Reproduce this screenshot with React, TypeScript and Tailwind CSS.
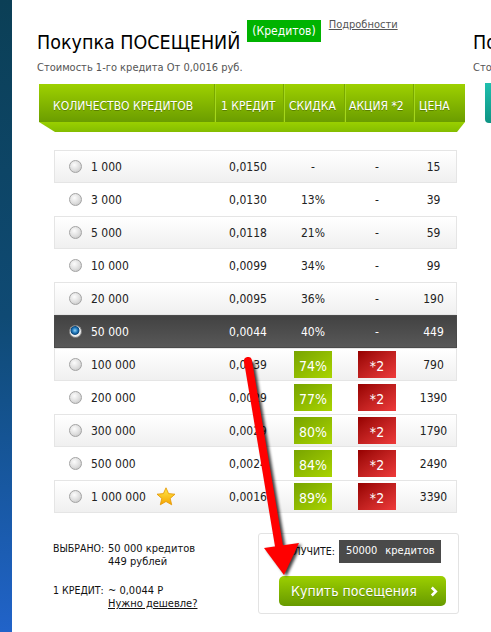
import React from "react";

type Row = { q: string; r: string; d: string; a: string; p: string; sel?: boolean; badge?: boolean; star?: boolean };

const rows: Row[] = [
  { q: "1 000", r: "0,0150", d: "-", a: "-", p: "15" },
  { q: "3 000", r: "0,0130", d: "13%", a: "-", p: "39" },
  { q: "5 000", r: "0,0118", d: "21%", a: "-", p: "59" },
  { q: "10 000", r: "0,0099", d: "34%", a: "-", p: "99" },
  { q: "20 000", r: "0,0095", d: "36%", a: "-", p: "190" },
  { q: "50 000", r: "0,0044", d: "40%", a: "-", p: "449", sel: true },
  { q: "100 000", r: "0,0039", d: "74%", a: "*2", p: "790", badge: true },
  { q: "200 000", r: "0,0029", d: "77%", a: "*2", p: "1390", badge: true },
  { q: "300 000", r: "0,0029", d: "80%", a: "*2", p: "1790", badge: true },
  { q: "500 000", r: "0,0024", d: "84%", a: "*2", p: "2490", badge: true },
  { q: "1 000 000", r: "0,0016", d: "89%", a: "*2", p: "3390", badge: true, star: true },
];

function Radio({ on }: { on?: boolean }) {
  if (on) {
    return (
      <span className="w-[13px] h-[13px] rounded-full border border-[#8a8a8a] shrink-0 bg-[radial-gradient(circle_at_45%_40%,#8fd2f5_0,#1d74b8_30%,#0c4a7e_45%,#f2f2f2_55%,#c6c6c6_100%)]" />
    );
  }
  return (
    <span className="w-[13px] h-[13px] rounded-full border border-[#a3a3a3] shrink-0 bg-[radial-gradient(circle_at_40%_35%,#fcfcfc_0,#dedede_55%,#bcbcbc_100%)]" />
  );
}

function Star() {
  return (
    <svg width="20" height="19" viewBox="0 0 20 19" className="shrink-0">
      <defs>
        <linearGradient id="stg" x1="0" y1="0" x2="0" y2="1">
          <stop offset="0" stopColor="#ffe94a" />
          <stop offset="1" stopColor="#f5a400" />
        </linearGradient>
      </defs>
      <polygon
        points="10,0.8 12.6,6.6 19,7.2 14.2,11.4 15.7,17.8 10,14.5 4.3,17.8 5.8,11.4 1,7.2 7.4,6.6"
        fill="url(#stg)"
        stroke="#e39400"
        strokeWidth="0.8"
        strokeLinejoin="round"
      />
    </svg>
  );
}

function TableRow({ row, idx }: { row: Row; idx: number }) {
  const odd = idx % 2 === 0;
  const cls = row.sel
    ? "bg-gradient-to-b from-[#424242] to-[#585858] border-[#4a4a4a] text-white"
    : odd
    ? "bg-gradient-to-b from-white to-[#f0f0f0] border-[#e5e5e5]"
    : "bg-white border-transparent";
  return (
    <div className={`grid grid-cols-[160px_66px_64px_64px_49px] h-[33px] items-center text-[12px] border ${cls}`}>
      <div className="flex items-center pl-[14px]">
        <Radio on={row.sel} />
        <span className="ml-[9px] whitespace-nowrap">{row.q}</span>
        {row.star && (
          <span className="ml-[10px] flex">
            <Star />
          </span>
        )}
      </div>
      <div className="text-center">{row.r}</div>
      <div className="flex justify-center">
        {row.badge ? (
          <span className="w-[38px] h-[27px] flex items-center justify-center pt-[4px] text-[14px] text-white bg-gradient-to-br from-[#78a400] to-[#a9d400]">
            {row.d}
          </span>
        ) : (
          <span>{row.d}</span>
        )}
      </div>
      <div className="flex justify-center">
        {row.badge ? (
          <span className="w-[38px] h-[27px] flex items-center justify-center pt-[4px] text-[14px] text-white bg-gradient-to-br from-[#960000] to-[#ef3a3a]">
            {row.a}
          </span>
        ) : (
          <span>{row.a}</span>
        )}
      </div>
      <div className="text-center">{row.p}</div>
    </div>
  );
}

function GreenHeader() {
  const cell = "flex items-center pt-[5px] border-l border-[#7aa900] shadow-[inset_1px_0_0_#a4d71c]";
  return (
    <div className="w-[426px] ml-[2px] mt-[10px]">
      <div className="flex h-[38px] bg-gradient-to-b from-[#9ed100] to-[#6b9d00] text-white text-[12px] uppercase [text-shadow:0_1px_0_rgba(0,0,0,0.25)] whitespace-nowrap">
        <div className="flex items-center pt-[5px] w-[175px] pl-[14px]">Количество кредитов</div>
        <div className={`${cell} w-[69px] pl-[6px]`}>1 кредит</div>
        <div className={`${cell} w-[61px] pl-[5px]`}>Скидка</div>
        <div className={`${cell} w-[69px] pl-[4px]`}>Акция *2</div>
        <div className={`${cell} w-[52px] pl-[5px]`}>Цена</div>
      </div>
      <div className="h-[10px] bg-gradient-to-b from-[#9ad000] to-[#84bd00] [clip-path:polygon(0_0,100%_0,calc(100%-8px)_100%,16px_100%)]" />
    </div>
  );
}

function Card1() {
  return (
    <div className="w-[428px] shrink-0 flex flex-col pt-[18px]">
      <div className="flex items-start h-[43px]">
        <h1 className="mt-[13px] text-[19.5px] leading-[24px] text-black whitespace-nowrap">Покупка ПОСЕЩЕНИЙ</h1>
        <span className="ml-[7px] mt-[2px] h-[22px] px-[5px] bg-[#00b300] text-white text-[12px] leading-[22px] whitespace-nowrap">
          (Кредитов)
        </span>
        <a className="ml-[8px] text-[11px] leading-[14px] underline text-[#555] whitespace-nowrap">Подробности</a>
      </div>
      <div className="text-[11px] leading-[13px] text-[#555] whitespace-nowrap">Стоимость 1-го кредита От 0,0016 руб.</div>
      <GreenHeader />
      <div className="mt-[18px] ml-[17px] w-[403px] flex flex-col">
        {rows.map((r, i) => (
          <TableRow key={i} row={r} idx={i} />
        ))}
      </div>
      <div className="mt-[20px] flex">
        <div className="w-[221px] shrink-0 pl-[16px] pt-[9px] text-[11px] leading-[13px] text-[#111]">
          <div className="grid grid-cols-[55px_auto]">
            <span className="text-[10.5px] whitespace-nowrap">ВЫБРАНО:</span>
            <span>50 000 кредитов</span>
            <span />
            <span>449 рублей</span>
          </div>
          <div className="grid grid-cols-[55px_auto] mt-[16px]">
            <span className="text-[10.5px] whitespace-nowrap">1 КРЕДИТ:</span>
            <span>~ 0,0044 Р</span>
            <span />
            <a className="underline">Нужно дешевле?</a>
          </div>
        </div>
        <div className="w-[201px] h-[81px] shrink-0 border border-[#e3e3e3] rounded-[3px] pt-[6px] pl-[20px]">
          <div className="flex items-center">
            <span className="text-[10.5px] text-[#111] whitespace-nowrap">ПОЛУЧИТЕ:</span>
            <span className="ml-[4px] h-[23px] w-[102px] bg-[#4a4a4a] text-white text-[11px] flex items-center pl-[7px] gap-[8px] whitespace-nowrap">
              <span>50000</span>
              <span>кредитов</span>
            </span>
          </div>
          <button className="mt-[13px] w-[167px] h-[30px] rounded-[5px] bg-gradient-to-b from-[#9dd000] to-[#679a00] text-white text-[14px] flex items-center pl-[12px] [text-shadow:0_1px_0_rgba(0,0,0,0.2)]">
            <span className="whitespace-nowrap">Купить посещения</span>
            <svg width="8" height="11" viewBox="0 0 8 11" className="ml-[13px]">
              <path d="M1.8 1.5 L5.8 5.5 L1.8 9.5" stroke="white" strokeWidth="2.6" fill="none" />
            </svg>
          </button>
        </div>
      </div>
    </div>
  );
}

function Card2() {
  return (
    <div className="w-[300px] shrink-0 flex flex-col pt-[18px]">
      <div className="flex items-start h-[43px]">
        <h1 className="mt-[13px] text-[19.5px] leading-[24px] text-black whitespace-nowrap">Покупка ПОКАЗОВ</h1>
      </div>
      <div className="text-[11px] leading-[13px] text-[#555] whitespace-nowrap">Стоимость 1-го показа От 0,0010 руб.</div>
      <div className="mt-[9px] ml-[12px] h-[40px] w-[280px] bg-gradient-to-b from-[#1fbfae] to-[#0d9484] rounded-bl-[4px]" />
    </div>
  );
}

function Arrow() {
  return (
    <svg className="absolute left-0 top-0 pointer-events-none" width="491" height="632">
      <defs>
        <filter id="ash" x="-50%" y="-50%" width="200%" height="200%">
          <feGaussianBlur stdDeviation="1.6" />
        </filter>
      </defs>
      <g filter="url(#ash)" opacity="0.75" transform="translate(2.5,1.5)">
        <line x1="248" y1="361" x2="280" y2="552" stroke="#000" strokeWidth="8" />
        <polygon points="264,548 299,543 284,575" fill="#000" />
      </g>
      <line x1="248" y1="361" x2="280" y2="552" stroke="#ff0000" strokeWidth="8" strokeLinecap="round" />
      <polygon points="264,548 299,543 284,575" fill="#ff0000" />
    </svg>
  );
}

export default function App() {
  return (
    <div className="relative flex w-[491px] h-[632px] overflow-hidden bg-white font-['DejaVu_Sans_Condensed','DejaVu_Sans',sans-serif] text-[#222]">
      <div className="w-[12px] shrink-0 bg-gradient-to-b from-[#0b3f56] via-[#0f4a74] to-[#2163c9]" />
      <div className="flex gap-[8px] pl-[25px] shrink-0">
        <Card1 />
        <Card2 />
      </div>
      <Arrow />
    </div>
  );
}
